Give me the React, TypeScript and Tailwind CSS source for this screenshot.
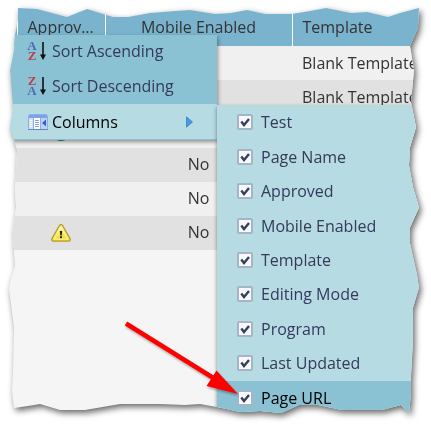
import { useState } from "react";

type Status = "approved" | "warning";

type Row = {
  status?: Status;
  mobile?: string;
  template?: string;
};

const rows: Row[] = [
  { template: "Blank Template" },
  { template: "Blank Template" },
  { status: "approved" },
  { mobile: "No" },
  { mobile: "No" },
  { status: "warning", mobile: "No" },
];

const columns = [
  "Test",
  "Page Name",
  "Approved",
  "Mobile Enabled",
  "Template",
  "Editing Mode",
  "Program",
  "Last Updated",
  "Page URL",
];

// Torn paper outline, drawn on a 431 x 425 sheet and scaled to the real one.
const outline = [
  [18, 8], [37, 9], [67, 17], [87, 9], [113, 17], [128, 17], [150, 13], [175, 11], [190, 10],
  [215, 14], [231, 13], [247, 10], [265, 14], [292, 14], [310, 11], [326, 8], [351, 13],
  [367, 12], [388, 17], [400, 13], [419, 8], [418, 28], [410, 46], [414, 70], [411, 102],
  [416, 127], [410, 147], [409, 165], [413, 187], [419, 207], [410, 227], [410, 243],
  [417, 274], [419, 287], [413, 307], [413, 340], [411, 375], [411, 392], [409, 412],
  [401, 404], [382, 409], [342, 409], [318, 404], [299, 404], [281, 412], [260, 410],
  [240, 411], [222, 407], [200, 403], [185, 404], [160, 403], [120, 403], [85, 409],
  [60, 409], [40, 403], [28, 405], [14, 407], [12, 390], [13, 370], [14, 327], [9, 288],
  [11, 278], [15, 265], [14, 253], [13, 232], [16, 207], [15, 190], [17, 150], [14, 139],
  [10, 128], [13, 110], [12, 95], [10, 70], [14, 50], [15, 35], [18, 20],
];

const tornEdge = `polygon(${outline
  .map(([x, y]) => `${(x / 431) * 100}% ${(y / 425) * 100}%`)
  .join(", ")})`;

const SortIcon = ({ descending = false }: { descending?: boolean }) => (
  <svg className="overflow-visible" width="20" height="20" viewBox="0 0 20 20" aria-hidden="true">
    <g fontFamily="Liberation Serif, serif" fontSize="13" fontWeight="bold" textAnchor="middle">
      <text x="4" y={descending ? 19 : 9} fill="#4a6db5">
        A
      </text>
      <text x="4" y={descending ? 9 : 19} fill="#b8414e">
        Z
      </text>
    </g>
    <path d="M15 1v14" stroke="#111" strokeWidth="1.6" />
    <path d="M12 13.5h6l-3 5.5z" fill="#111" />
  </svg>
);

const ColumnsIcon = () => (
  <svg width="20" height="16" viewBox="0 0 20 16" aria-hidden="true">
    <rect x="0.5" y="0.5" width="19" height="15" rx="1" fill="#fff" stroke="#8eaeea" />
    <rect x="1" y="1" width="18" height="3" fill="#7ea1e8" />
    <rect x="1" y="4" width="4" height="11" fill="#d3e0f7" />
    <rect x="13" y="4" width="6" height="11" fill="#bcd2f6" />
    <path d="M5.5 4v11M12.5 4v11" stroke="#8cabea" />
    <path d="M7 6.5h4M7 8.5h4M7 10.5h4M7 12.5h4" stroke="#86a5de" />
    <path d="M2 6.5h2M2 8.5h2M2 10.5h2M2 12.5h2" stroke="#fff" />
    <path d="M18 5.5v7l-4-3.5z" fill="#2c63cf" />
    <path d="M0 15.5h20" stroke="#6883bb" />
  </svg>
);

const WarningIcon = () => (
  <svg width="20" height="18" viewBox="0 0 20 18" role="img" aria-label="Warning">
    <defs>
      <linearGradient id="warning" x1="0" y1="0" x2="0" y2="1">
        <stop offset="0" stopColor="#fbf3a0" />
        <stop offset="1" stopColor="#f0dc2c" />
      </linearGradient>
    </defs>
    <path
      d="M8.3 1.8Q10 -.5 11.7 1.8L19 14.5Q19.8 17.2 17.5 17.2H2.5Q.2 17.2 1 14.5z"
      fill="url(#warning)"
      stroke="#b39a2a"
      strokeWidth="1.3"
    />
    <path d="M10 3.3L3 15.2h14z" fill="none" stroke="#fffbd0" strokeOpacity=".7" />
    <path d="M8.8 7h2.4l-.5 4.5H9.3z" fill="#222" />
    <rect x="9" y="12.3" width="2" height="1.8" fill="#222" />
  </svg>
);

const ApprovedIcon = () => (
  <svg width="20" height="20" viewBox="0 0 20 20" role="img" aria-label="Approved">
    <circle cx="10" cy="10" r="9.5" fill="#3fae49" stroke="#2c9237" />
    <path d="M5.5 10.5l3 3 6-7" fill="none" stroke="#fff" strokeWidth="2" />
  </svg>
);

const StatusIcon = ({ status }: { status?: Status }) => {
  if (status === "warning") return <WarningIcon />;
  if (status === "approved") return <ApprovedIcon />;
  return null;
};

const PageTable = () => (
  <table className="w-full table-fixed border-collapse text-[#333]">
    <colgroup>
      <col className="w-[17px]" />
      <col className="w-[88px]" />
      <col className="w-[187px]" />
      <col />
    </colgroup>
    <thead>
      <tr className="h-[46px] bg-[#7ab3cd]">
        <td />
        <th className="truncate border-l border-white px-2.5 pt-2 text-left font-normal">
          Approved
        </th>
        <th className="border-l border-white pt-2 font-normal">Mobile Enabled</th>
        <th className="border-l border-white px-2.5 pt-2 text-left font-normal">Template</th>
      </tr>
    </thead>
    <tbody>
      {rows.map((row, i) => (
        <tr key={i} className="h-[34px] odd:bg-[#f0f0f0] even:bg-[#e1e1e1]">
          <td />
          <td>
            <div className="flex justify-center">
              <StatusIcon status={row.status} />
            </div>
          </td>
          <td className="pb-0.5 text-center">{row.mobile}</td>
          <td className="overflow-hidden px-2.5 whitespace-nowrap">{row.template}</td>
        </tr>
      ))}
    </tbody>
  </table>
);

const HeaderMenu = () => (
  <div
    role="menu"
    className="absolute top-[35px] left-0 w-[217px] border-b border-[#8ac1d3] bg-[#8ac1d3] text-[#333a5c] shadow-[1px_2px_4px_rgba(0,0,0,0.4)]"
  >
    <button role="menuitem" className="flex h-[34px] w-full items-center gap-1 pb-0.5 pl-7">
      <SortIcon />
      Sort Ascending
    </button>
    <button role="menuitem" className="flex h-[35px] w-full items-center gap-1 pb-0.5 pl-7">
      <SortIcon descending />
      Sort Descending
    </button>
    <button
      role="menuitem"
      aria-haspopup="menu"
      aria-expanded="true"
      className="flex h-[35px] w-full items-center gap-1 bg-[#b7dbe3] pr-6 pl-7 text-black"
    >
      <ColumnsIcon />
      Columns
      <svg className="ml-auto" width="7" height="12" viewBox="0 0 7 12" aria-hidden="true">
        <path d="M.5 .8v10.4L6.5 6z" fill="#4b96dd" stroke="#3a7fca" strokeWidth=".8" />
      </svg>
    </button>
  </div>
);

const ColumnsMenu = () => {
  const [hidden, setHidden] = useState<string[]>([]);

  const toggle = (name: string) =>
    setHidden(hidden.includes(name) ? hidden.filter((n) => n !== name) : [...hidden, name]);

  return (
    <div className="absolute top-[105px] right-0 left-[217px] grid h-[310px] auto-rows-fr bg-[#b7dbe3] text-[#333a5c] shadow-[0_2px_4px_rgba(0,0,0,0.45)]">
      {columns.map((name) => (
        <label
          key={name}
          className="flex items-center gap-2 pl-5 last:bg-[#8ac1d3] last:text-black"
        >
          <span className="grid">
            <input
              type="checkbox"
              checked={!hidden.includes(name)}
              onChange={() => toggle(name)}
              className="peer col-start-1 row-start-1 size-4 appearance-none rounded-xs border-2 border-[#a6b4c8] bg-[#f7f8fc]"
            />
            <svg
              className="pointer-events-none invisible col-start-1 row-start-1 peer-checked:visible"
              width="16"
              height="16"
              viewBox="0 0 16 16"
              aria-hidden="true"
            >
              <path d="M4.3 7.5l2.7 3.5 5-6" fill="none" stroke="#35405a" strokeWidth="2.4" />
            </svg>
          </span>
          {name}
        </label>
      ))}
    </div>
  );
};

const Arrow = () => (
  <svg
    className="pointer-events-none absolute top-[318px] left-[120px] drop-shadow-[1px_2px_1px_rgba(0,0,0,0.3)]"
    width="120"
    height="80"
    viewBox="0 0 120 80"
    aria-hidden="true"
  >
    <path d="M6 5.5L95 61" stroke="#f00" strokeWidth="4.5" />
    <path d="M96.5 52.5L118 76 86.5 68z" fill="#f00" />
  </svg>
);

const App = () => (
  <main className="relative bg-white font-['Open_Sans','Noto_Sans',sans-serif] text-base">
    <div className="drop-shadow-[2px_3px_3px_rgba(0,0,0,0.6)]">
      <div className="relative bg-[#f5f5f5] pb-44" style={{ clipPath: tornEdge }}>
        <PageTable />
        <HeaderMenu />
        <ColumnsMenu />
      </div>
    </div>
    <Arrow />
  </main>
);

export default App;
